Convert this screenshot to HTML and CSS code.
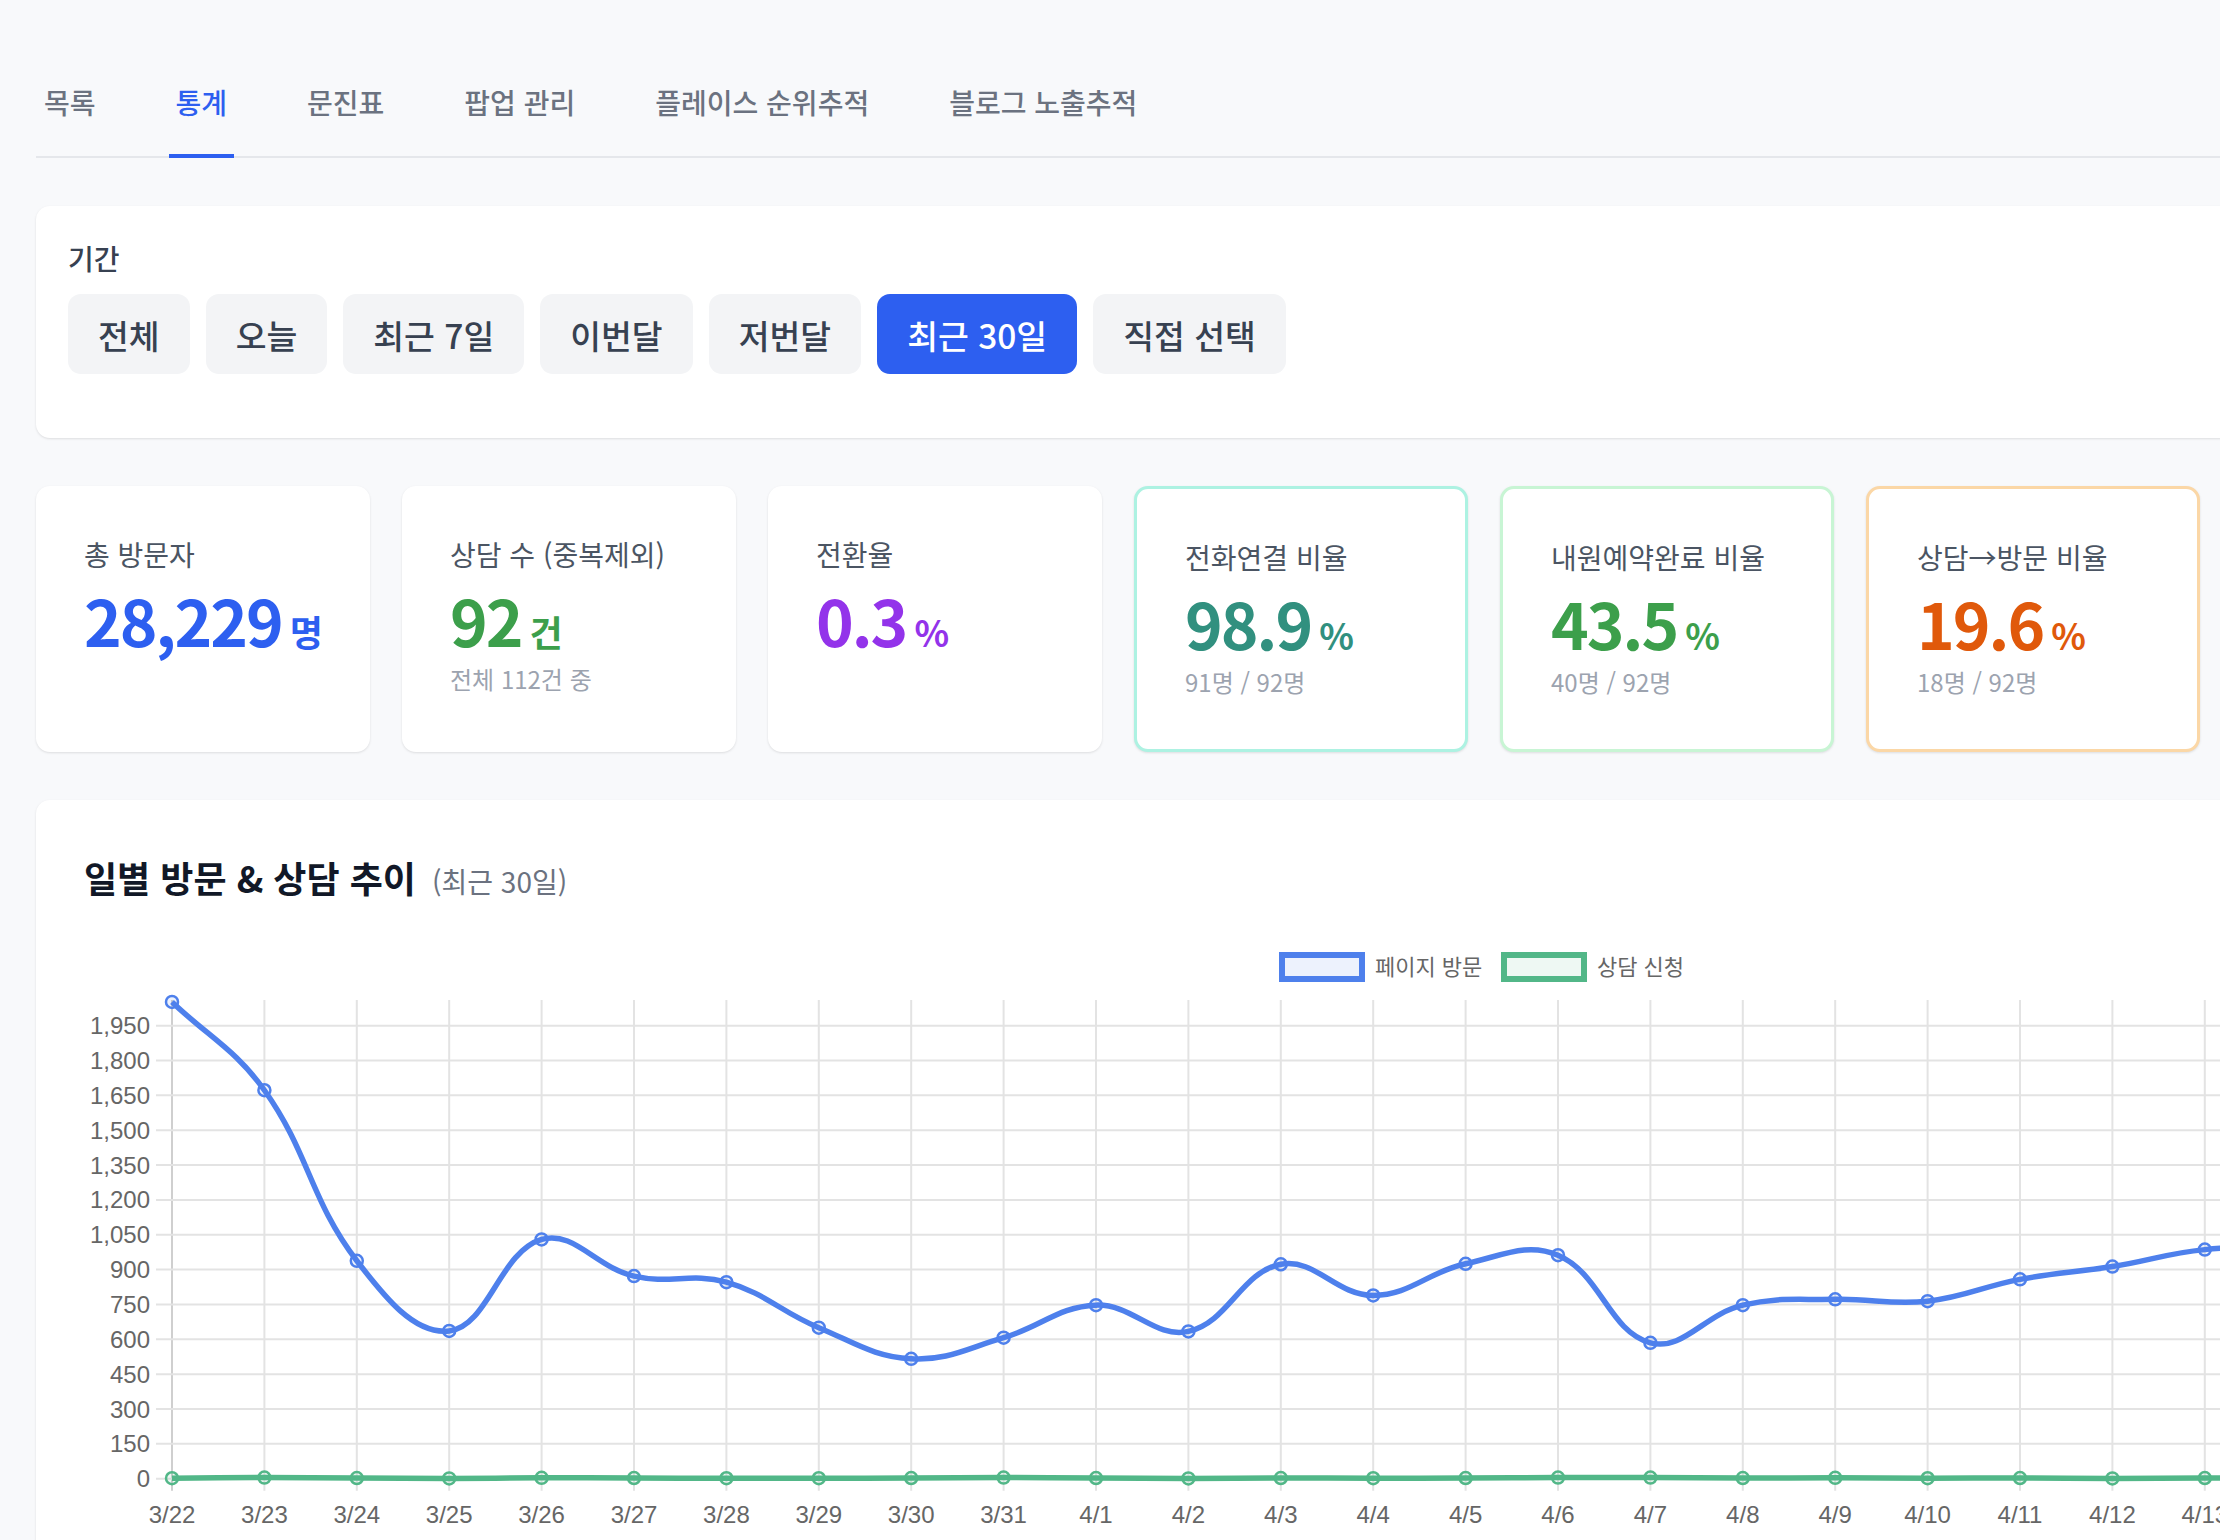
FILE: index.html
```html
<!DOCTYPE html>
<html lang="ko">
<head>
  <meta charset="UTF-8">
  <meta name="viewport" content="width=device-width, initial-scale=1.0">
  <title>통계</title>
  <link rel="stylesheet" href="styles.css">
</head>
<body>
  <div class="page">
    <!-- Tabs -->
    <nav class="tabs">
      <a class="tab">목록</a>
      <a class="tab active">통계</a>
      <a class="tab">문진표</a>
      <a class="tab">팝업 관리</a>
      <a class="tab">플레이스 순위추적</a>
      <a class="tab">블로그 노출추적</a>
    </nav>

    <!-- Period filter -->
    <section class="card period">
      <div class="period-label">기간</div>
      <div class="period-btns">
        <button class="period-btn">전체</button>
        <button class="period-btn">오늘</button>
        <button class="period-btn">최근 7일</button>
        <button class="period-btn">이번달</button>
        <button class="period-btn">저번달</button>
        <button class="period-btn active">최근 30일</button>
        <button class="period-btn">직접 선택</button>
      </div>
    </section>

    <!-- Summary cards -->
    <div class="stats">
      <div class="stat">
        <div class="stat-label">총 방문자</div>
        <div class="stat-value blue">28,229<span class="unit">명</span></div>
      </div>
      <div class="stat">
        <div class="stat-label">상담 수 (중복제외)</div>
        <div class="stat-value green">92<span class="unit">건</span></div>
        <div class="stat-sub">전체 112건 중</div>
      </div>
      <div class="stat">
        <div class="stat-label">전환율</div>
        <div class="stat-value purple">0.3<span class="unit">%</span></div>
      </div>
      <div class="stat outlined teal-line">
        <div class="stat-label">전화연결 비율</div>
        <div class="stat-value teal">98.9<span class="unit">%</span></div>
        <div class="stat-sub">91명 / 92명</div>
      </div>
      <div class="stat outlined green-line">
        <div class="stat-label">내원예약완료 비율</div>
        <div class="stat-value green">43.5<span class="unit">%</span></div>
        <div class="stat-sub">40명 / 92명</div>
      </div>
      <div class="stat outlined orange-line">
        <div class="stat-label">상담→방문 비율</div>
        <div class="stat-value orange">19.6<span class="unit">%</span></div>
        <div class="stat-sub">18명 / 92명</div>
      </div>
    </div>

    <!-- Daily chart -->
    <section class="card chart-card">
      <h2 class="chart-title">일별 방문 &amp; 상담 추이 <span class="chart-sub">(최근 30일)</span></h2>
      <svg id="chart" class="chart" width="2796" height="640" viewBox="0 0 2796 640"></svg>
    </section>
  </div>
  <script src="chart.js"></script>
</body>
</html>
```

FILE: styles.css
```css
* {
  box-sizing: border-box;
}
html, body {
  margin: 0;
  overflow: hidden;
}
body {
  background: #f8f9fb;
  color: #374151;
  font-family: "Noto Sans CJK KR", "Noto Sans", sans-serif;
}
.page {
  width: 2964px;
  padding: 64px 36px 0;
  display: flex;
  flex-direction: column;
  gap: 48px;
}

/* Tabs */
.tabs {
  display: flex;
  gap: 66px;
  border-bottom: 2px solid #e5e7eb;
}
.tab {
  padding: 20px 7px 34px;
  font-size: 28px;
  line-height: 36px;
  font-weight: 500;
  color: #6b7280;
  border-bottom: 4px solid transparent;
  margin-bottom: -2px;
}
.tab:first-child {
  padding-left: 8px;
}
.tab.active {
  color: #2d5ff0;
  border-bottom-color: #2d5ff0;
}

/* Cards */
.card {
  background: #fff;
  border-radius: 14px;
  box-shadow: 0 1px 3px rgba(0, 0, 0, 0.08), 0 1px 2px rgba(0, 0, 0, 0.04);
}
.period {
  padding: 37px 32px 64px;
}
.period-label {
  font-size: 28px;
  line-height: 30px;
  font-weight: 500;
  color: #374151;
  margin-bottom: 21px;
}
.period-btns {
  display: flex;
  gap: 16px;
}
.period-btn {
  height: 80px;
  padding: 0 30px;
  border: none;
  border-radius: 13px;
  background: #f3f4f6;
  color: #374151;
  font-family: inherit;
  font-size: 33.5px;
  font-weight: 500;
  white-space: nowrap;
}
.period-btn.active {
  background: #2d5ff0;
  color: #fff;
}

/* Stat cards */
.stats {
  display: grid;
  grid-template-columns: repeat(6, 334px);
  gap: 32px;
}
.stat {
  background: #fff;
  border-radius: 14px;
  padding: 48px;
  height: 266px;
  box-shadow: 0 1px 3px rgba(0, 0, 0, 0.08), 0 1px 2px rgba(0, 0, 0, 0.04);
}
.stat.outlined {
  border: 3px solid;
}
.teal-line { border-color: #adf2e2 !important; }
.green-line { border-color: #c8f5d4 !important; }
.orange-line { border-color: #fbd7a6 !important; }
.stat-label {
  font-size: 28px;
  line-height: 40px;
  color: #4b5563;
  white-space: nowrap;
}
.stat-value {
  margin-top: 9px;
  font-size: 64px;
  line-height: 72px;
  font-weight: 700;
  letter-spacing: -2px;
  white-space: nowrap;
}
.unit {
  font-size: 36px;
  line-height: 1;
  margin-left: 8px;
  letter-spacing: 0;
}
.stat-sub {
  margin-top: 7px;
  font-size: 24px;
  line-height: 34px;
  color: #9ca3af;
}
.blue { color: #2d5ff0; }
.green { color: #3c9f4b; }
.purple { color: #9333ea; }
.teal { color: #31907f; }
.orange { color: #e0590b; }

/* Chart */
.chart-card {
  padding: 53px 48px 40px;
}
.chart-title {
  margin: 0;
  font-size: 36px;
  line-height: 48px;
  font-weight: 700;
  color: #111827;
}
.chart-sub {
  margin-left: 6px;
  font-size: 28px;
  font-weight: 400;
  color: #6b7280;
}
.chart {
  display: block;
  margin-top: 15px;
  font-family: "Liberation Sans", "Noto Sans CJK KR", sans-serif;
}
```

FILE: chart.js
```js
// Daily visits / consultations (last 30 days)
const labels = ["3/22","3/23","3/24","3/25","3/26","3/27","3/28","3/29","3/30","3/31",
  "4/1","4/2","4/3","4/4","4/5","4/6","4/7","4/8","4/9","4/10",
  "4/11","4/12","4/13","4/14","4/15","4/16","4/17","4/18","4/19","4/20"];
const visits = [2052,1672,938,636,1030,872,846,650,516,607,
  747,634,923,789,925,962,585,747,772,764,
  858,913,986,990,930,880,915,985,1040,965];
const consults = [2,5,3,1,4,3,2,2,3,5,3,1,3,2,3,5,5,3,4,2,3,1,3,4,3,2,3,5,4,3];

const svg = document.getElementById("chart");
const NS = "http://www.w3.org/2000/svg";
const area = { left: 88, right: 2768, top: 80, bottom: 558.7 };
const step = 92.4;
const perUnit = 34.85 / 150;

function el(name, attrs, text) {
  const node = document.createElementNS(NS, name);
  for (const k in attrs) node.setAttribute(k, attrs[k]);
  if (text !== undefined) node.textContent = text;
  svg.appendChild(node);
  return node;
}
const xAt = i => area.left + i * step;
const yAt = v => area.bottom - v * perUnit;

// grid
for (let i = 0; i < labels.length; i++) {
  el("line", { x1: xAt(i), x2: xAt(i), y1: area.top, y2: area.bottom + 12,
    stroke: i === 0 ? "#cfcfcf" : "#e3e3e3", "stroke-width": 2 });
}
for (let v = 0; v <= 1950; v += 150) {
  el("line", { x1: area.left - 16, x2: area.right, y1: yAt(v), y2: yAt(v), stroke: "#e3e3e3", "stroke-width": 2 });
  el("text", { x: 66, y: yAt(v) + 8.5, "text-anchor": "end", "font-size": 24, fill: "#666" }, v.toLocaleString("en-US"));
}
labels.forEach((l, i) => {
  el("text", { x: xAt(i), y: 603, "text-anchor": "middle", "font-size": 24, fill: "#666" }, l);
});

// legend
function legend(x, color, fill, text) {
  el("rect", { x: x + 3, y: 35, width: 80, height: 24, fill: fill, stroke: color, "stroke-width": 6 });
  el("text", { x: x + 96, y: 55, "font-size": 22, fill: "#666" }, text);
}
legend(1195, "#4e80ec", "#edf2fd", "페이지 방문");
legend(1417, "#52b788", "#eef8f3", "상담 신청");

// Chart.js style spline (tension 0.4)
function curve(values, color, fill) {
  const pts = values.map((v, i) => ({ x: xAt(i), y: yAt(v) }));
  const t = 0.4;
  pts.forEach((p, i) => {
    const prev = pts[i - 1] || p, next = pts[i + 1] || p;
    const d01 = Math.hypot(p.x - prev.x, p.y - prev.y);
    const d12 = Math.hypot(next.x - p.x, next.y - p.y);
    const s01 = d01 / (d01 + d12) || 0, s12 = d12 / (d01 + d12) || 0;
    const clamp = (q) => ({
      x: Math.min(Math.max(q.x, area.left), area.right),
      y: Math.min(Math.max(q.y, area.top), area.bottom)
    });
    p.cp1 = clamp({ x: p.x - t * s01 * (next.x - prev.x), y: p.y - t * s01 * (next.y - prev.y) });
    p.cp2 = clamp({ x: p.x + t * s12 * (next.x - prev.x), y: p.y + t * s12 * (next.y - prev.y) });
  });
  let d = `M${pts[0].x},${pts[0].y}`;
  for (let i = 1; i < pts.length; i++) {
    d += ` C${pts[i - 1].cp2.x},${pts[i - 1].cp2.y} ${pts[i].cp1.x},${pts[i].cp1.y} ${pts[i].x},${pts[i].y}`;
  }
  el("path", { d: d, fill: "none", stroke: color, "stroke-width": 5.5, "stroke-linejoin": "round" });
  pts.forEach(p => el("circle", { cx: p.x, cy: p.y, r: 6, fill: fill, stroke: color, "stroke-width": 2.5 }));
}
curve(consults, "#52b788", "rgba(82,183,136,0.1)");
curve(visits, "#4e80ec", "rgba(78,128,236,0.1)");
```
